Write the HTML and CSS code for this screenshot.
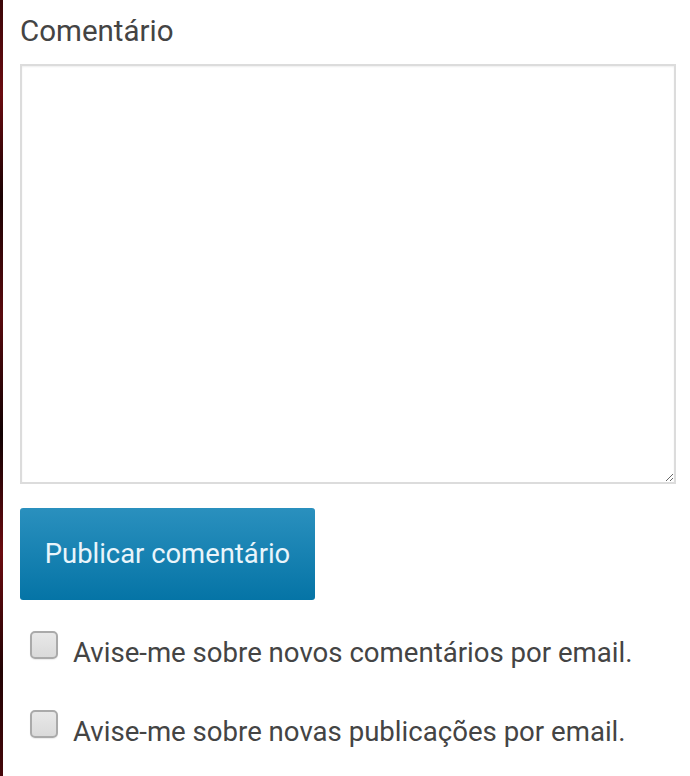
FILE: index.html
```html
<!DOCTYPE html>
<html lang="pt">
<head>
<meta charset="utf-8">
<link rel="stylesheet" href="styles.css">
</head>
<body>
<div class="page">
  <form class="comment-form">
    <label class="field-label" for="comment">Comentário</label>
    <textarea id="comment" class="comment-box"></textarea>
    <button type="button" class="submit-btn">Publicar comentário</button>
    <label class="check-row first">
      <span class="check-box"></span>
      <span class="check-text">Avise-me sobre novos comentários por email.</span>
    </label>
    <label class="check-row">
      <span class="check-box"></span>
      <span class="check-text">Avise-me sobre novas publicações por email.</span>
    </label>
  </form>
</div>
</body>
</html>
```

FILE: styles.css
```css
html, body {
  margin: 0;
  padding: 0;
  background: #fff;
}
body {
  font-family: Roboto, "Liberation Sans", sans-serif;
  color: #444;
}
.page {
  min-height: 776px;
  box-sizing: border-box;
  border-left: 3px solid #2a0505;
  border-image: linear-gradient(180deg, #3a0608 0%, #6b0b10 12%, #1a0203 25%, #5a0a0e 40%, #100102 55%, #6b0b10 70%, #220304 85%, #4a080b 100%) 1;
  padding: 0 14px 0 17px;
}
.comment-form {
  display: flex;
  flex-direction: column;
  align-items: flex-start;
}
.field-label {
  font-size: 29.5px;
  line-height: 34px;
  margin-top: 14px;
  height: 34px;
  margin-bottom: 16px;
}
.comment-box {
  width: 656px;
  height: 420px;
  box-sizing: border-box;
  border: 2px solid #dcdcdc;
  box-shadow: inset 0 1px 2px rgba(0,0,0,0.07);
  border-radius: 0;
  margin: 0;
  resize: vertical;
  font-family: inherit;
  background: #fff;
}
.submit-btn {
  margin-top: 24px;
  width: 295px;
  height: 92px;
  border: none;
  border-radius: 3px;
  background: linear-gradient(180deg, #2a90be 0%, #0574a6 100%);
  color: #eaf5fb;
  font-family: Roboto, "Liberation Sans", sans-serif;
  font-size: 27.4px;
  padding: 0;
}
.check-row {
  display: flex;
  align-items: flex-start;
  gap: 15px;
  margin-left: 10px;
  height: 79px;
}
.check-row.first {
  margin-top: 31px;
}
.check-box {
  width: 28px;
  height: 28px;
  box-sizing: border-box;
  border: 2px solid #aaa;
  border-radius: 5px;
  background: linear-gradient(180deg, #e8e8e8, #dadada);
  box-shadow: 0 1px 1px rgba(0,0,0,0.08);
  flex: none;
}
.check-text {
  font-size: 27.6px;
  line-height: 34px;
  margin-top: 5px;
}
```
